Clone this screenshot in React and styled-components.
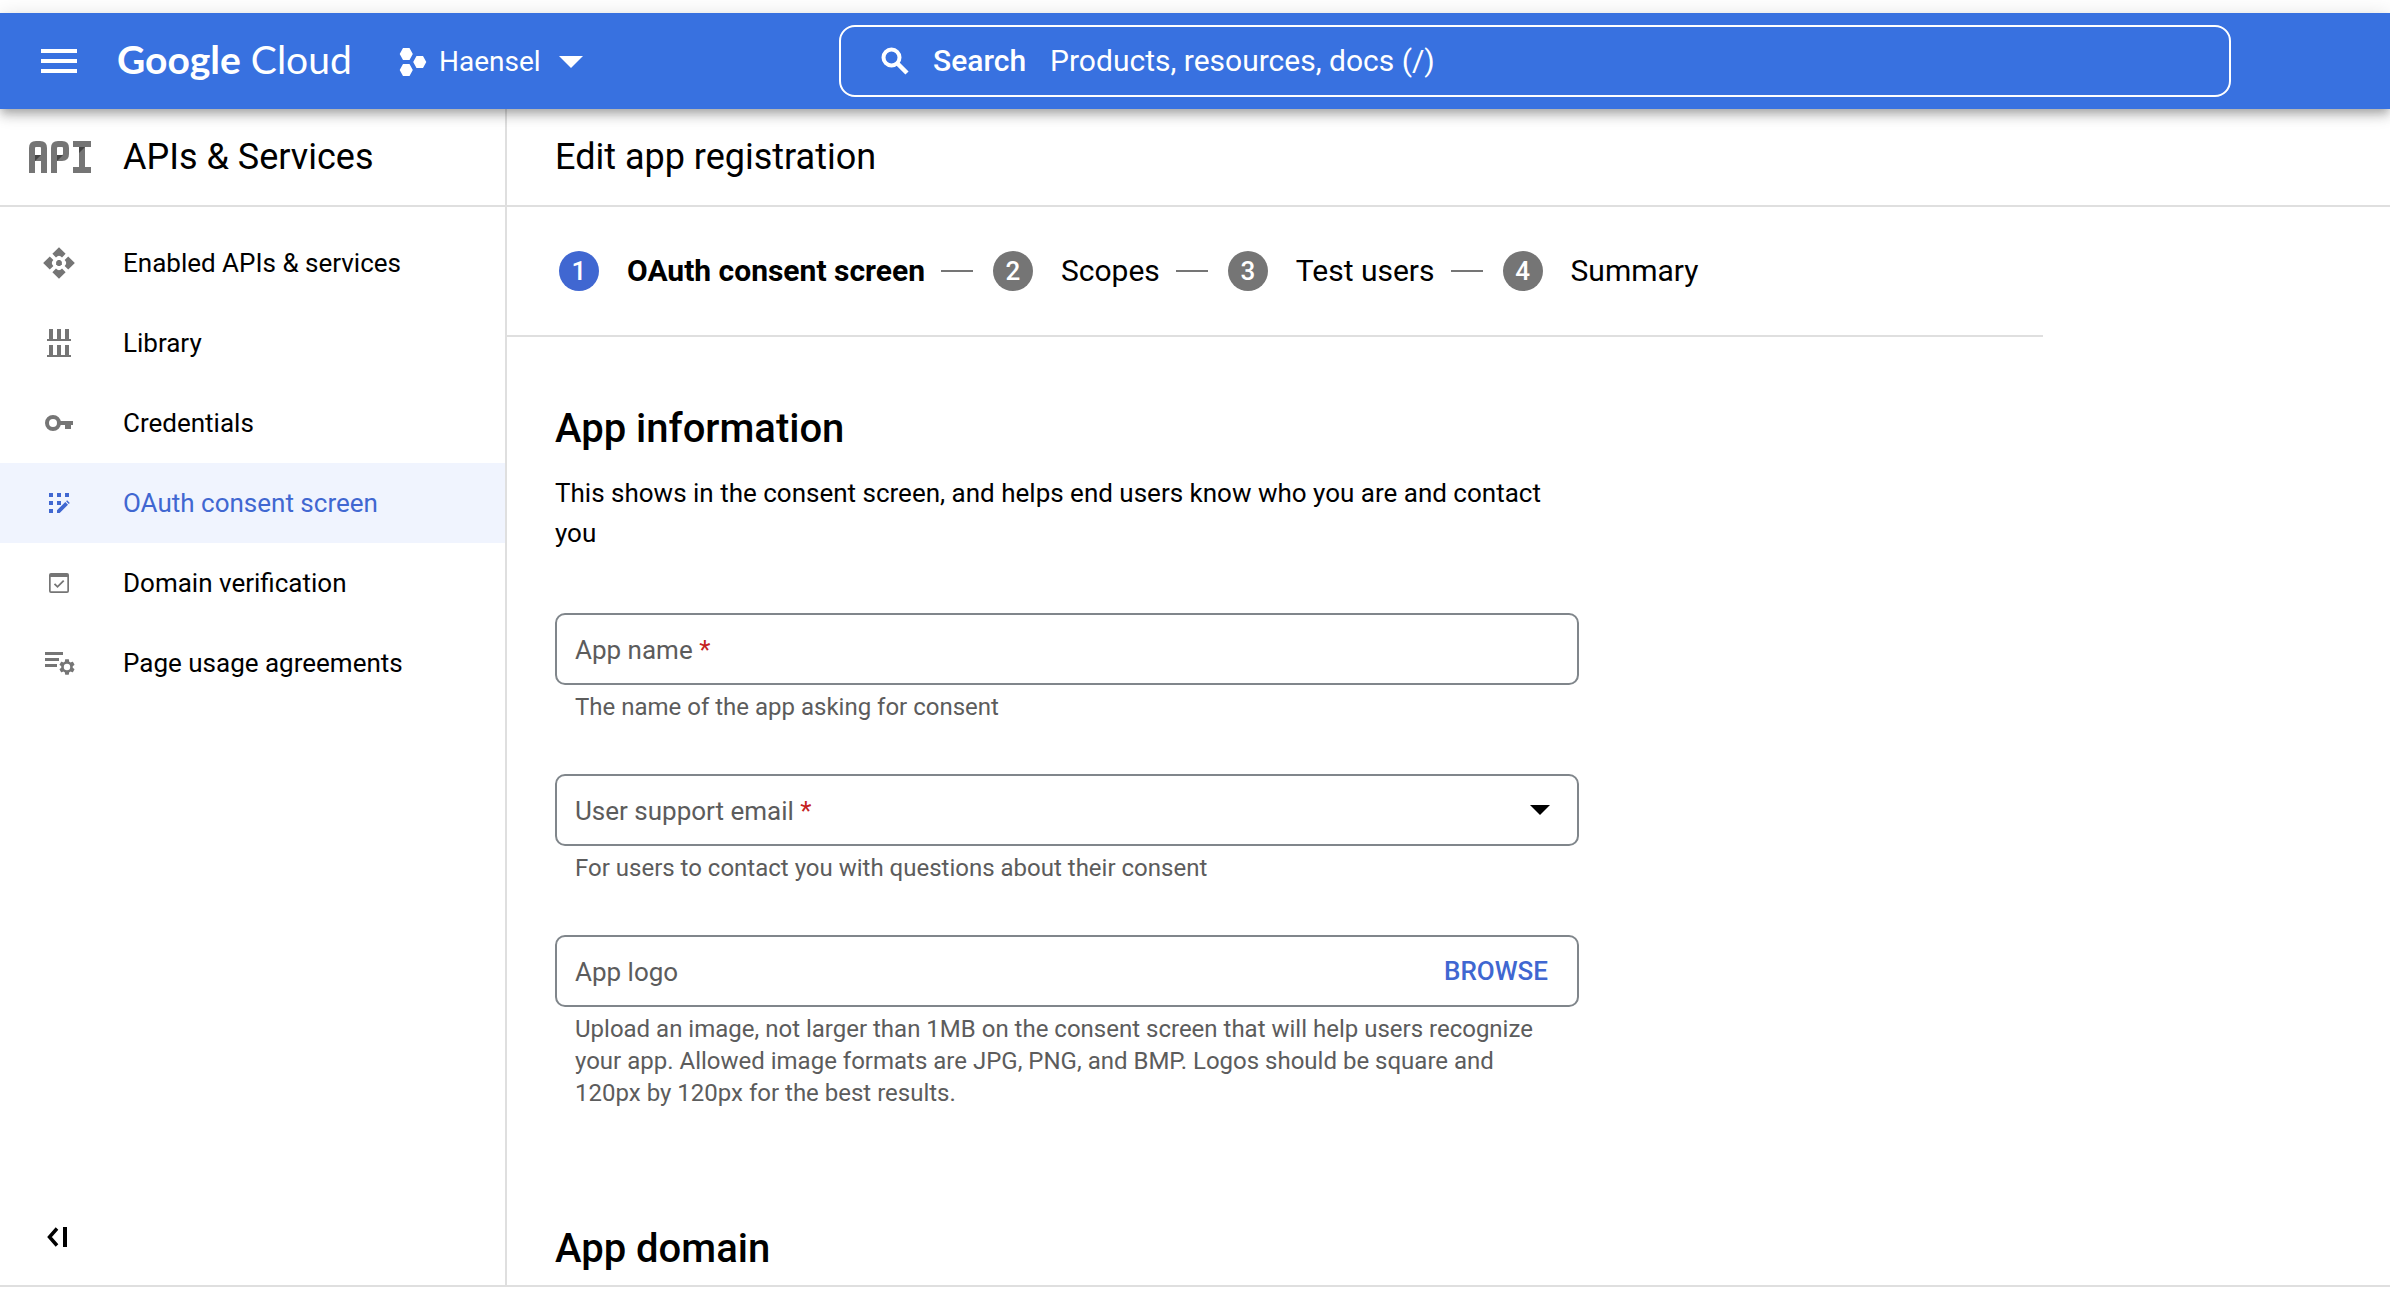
import React from "react";
import styled, { createGlobalStyle } from "styled-components";

const color = {
  header: "#3871e0",
  active: "#4067d1",
  activeBg: "#f0f4fe",
  line: "#dfdfdf",
  icon: "#757575",
  muted: "#5c5c5c",
  outline: "#80868b",
  error: "#c5221f",
};

const GlobalStyle = createGlobalStyle`
  *, *::before, *::after { box-sizing: border-box; }
  body {
    margin: 0;
    background: #fff;
    color: #000;
    font-family: Roboto, "Liberation Sans", sans-serif;
    font-size: 26px;
    line-height: 40px;
  }
  button, input, select { font: inherit; color: inherit; }
  svg { display: block; flex: none; }
`;

const Page = styled.div`
  display: flex;
  flex-direction: column;
  min-height: 100vh;
  padding: 13px 0 8px;
`;

/* ---------- Header ---------- */

const Header = styled.header`
  display: grid;
  grid-template-columns: 839px minmax(0, 1fr) 159px;
  align-items: center;
  height: 96px;
  background: ${color.header};
  color: #fff;
  position: relative;
  z-index: 1;
  box-shadow:
    0 4px 8px -2px rgba(0, 0, 0, 0.2),
    0 8px 10px rgba(0, 0, 0, 0.14),
    0 2px 20px rgba(0, 0, 0, 0.12);
`;

const HeaderStart = styled.div`
  display: flex;
  align-items: center;
  padding-left: 35px;
`;

const PlainButton = styled.button`
  display: flex;
  align-items: center;
  padding: 0;
  border: 0;
  background: none;
  cursor: pointer;
`;

const Wordmark = styled.a`
  margin-left: 34px;
  width: 234px;
  padding-bottom: 4px;
  color: #fff;
  font-family: Lato, sans-serif;
  font-size: 39px;
  line-height: 48px;
  text-decoration: none;
  white-space: nowrap;
  span { font-weight: 700; }
`;

const ProjectButton = styled(PlainButton)`
  margin-left: 48px;
  padding-top: 2px;
  font-size: 28px;
  gap: 12px;
  svg:last-child { margin-left: 6px; }
`;

const SearchBox = styled.div`
  display: flex;
  align-items: center;
  height: 72px;
  padding: 0 40px;
  border: 2px solid #fff;
  border-radius: 16px;
  font-size: 30px;
`;

const SearchLabel = styled.label`
  margin: 0 24px;
  font-weight: 500;
`;

const SearchInput = styled.input`
  flex: 1;
  min-width: 0;
  padding: 0;
  border: 0;
  outline: 0;
  background: none;
  &::placeholder { color: #fff; opacity: 1; }
`;

/* ---------- Body ---------- */

const Body = styled.div`
  display: grid;
  grid-template-columns: 507px minmax(0, 1fr);
  flex: 1;
  border-bottom: 2px solid ${color.line};
`;

const Sidebar = styled.aside`
  display: flex;
  flex-direction: column;
  border-right: 2px solid ${color.line};
`;

const TitleBar = styled.div`
  display: flex;
  align-items: center;
  height: 98px;
  padding-left: ${(p) => p.$inset}px;
  gap: 31px;
  border-bottom: 2px solid ${color.line};
`;

const Title = styled.p`
  margin: 0;
  font-size: 36px;
  font-weight: 400;
  line-height: 48px;
`;

const NavList = styled.ul`
  flex: 1;
  margin: 0;
  padding: 16px 0;
  list-style: none;
`;

const NavLink = styled.a`
  display: flex;
  align-items: center;
  gap: 46px;
  height: 80px;
  padding-left: 41px;
  color: ${(p) => (p.$active ? color.active : "#000")};
  background: ${(p) => (p.$active ? color.activeBg : "transparent")};
  text-decoration: none;
  svg { color: ${(p) => (p.$active ? color.active : color.icon)}; }
`;

const CollapseButton = styled(PlainButton)`
  align-self: flex-start;
  margin: 0 0 30px 39px;
`;

const Main = styled.main`
  display: flex;
  flex-direction: column;
`;

const Stepper = styled.ol`
  display: flex;
  align-items: center;
  width: 100%;
  max-width: 1536px;
  height: 130px;
  margin: 0;
  padding: 0 0 0 52px;
  border-bottom: 2px solid ${color.line};
  list-style: none;
  font-size: 30px;
`;

const Step = styled.li`
  display: flex;
  align-items: center;
  font-weight: ${(p) => (p.$active ? 700 : 400)};
  &:not(:first-child)::before {
    content: "";
    width: 32px;
    height: 2px;
    margin: 0 20px 0 16px;
    background: ${color.icon};
  }
`;

const StepNumber = styled.span`
  display: flex;
  align-items: center;
  justify-content: center;
  width: 40px;
  height: 40px;
  margin-right: 28px;
  border-radius: 50%;
  background: ${(p) => (p.$active ? color.active : color.icon)};
  color: #fff;
  font-size: 26px;
  font-weight: 500;
`;

const Form = styled.form`
  display: flex;
  flex-direction: column;
  max-width: 1072px;
  padding: 68px 0 0 48px;
`;

const Section = styled.section`
  & + & { padding-top: 65px; }
`;

const SectionTitle = styled.h2`
  margin: 0;
  font-size: 40px;
  font-weight: 500;
  line-height: 48px;
`;

const Intro = styled.p`
  margin: 20px 0 60px;
`;

const Field = styled.div`
  margin-bottom: 51px;
`;

const FieldBox = styled.div`
  position: relative;
  display: flex;
  align-items: center;
  height: 72px;
  border: 2px solid ${color.outline};
  border-radius: 10px;
`;

const FieldLabel = styled.label`
  position: absolute;
  left: 18px;
  top: 15px;
  color: ${color.muted};
  pointer-events: none;
`;

const Required = styled.span`
  color: ${color.error};
`;

const TextInput = styled.input`
  flex: 1;
  min-width: 0;
  height: 100%;
  padding: 0 18px;
  border: 0;
  outline: 0;
  border-radius: 8px;
  background: none;
`;

const Select = styled.select`
  flex: 1;
  height: 100%;
  padding: 0 18px;
  border: 0;
  outline: 0;
  appearance: none;
  background: none;
`;

const SelectArrow = styled.svg`
  position: absolute;
  right: 27px;
  top: 29px;
  pointer-events: none;
`;

const BrowseButton = styled(PlainButton)`
  margin-right: 29px;
  color: ${color.active};
  font-weight: 500;
`;

const Help = styled.p`
  margin: 6px 18px 0 20px;
  color: ${color.muted};
  font-size: 24px;
  line-height: 32px;
`;

/* ---------- Icons ---------- */

const Icon = ({ children, viewBox = "0 0 36 36" }) => (
  <svg width="36" height="36" viewBox={viewBox} fill="currentColor" aria-hidden="true">
    {children}
  </svg>
);

const EnabledIcon = () => (
  <Icon viewBox="-0.5 -0.5 25 25">
    <path d="M12 1 7.4 5.6l2.5 2.5Q12 5.9 14.1 8.1l2.5-2.5zM1 12l4.6 4.6 2.5-2.5Q5.9 12 8.1 9.9L5.6 7.4zM23 12l-4.6 4.6-2.5-2.5Q18.1 12 15.9 9.9l2.5-2.5zM12 23l4.6-4.6-2.5-2.5Q12 18.1 9.9 15.9l-2.5 2.5z" />
    <path d="M11.2 10h1.6L14 11.2v1.6L12.8 14h-1.6L10 12.8v-1.6z" />
  </Icon>
);

const LibraryIcon = () => (
  <Icon>
    <path d="M8 4h4v10H8zM16 4h4v10h-4zM24 4h4v10h-4zM6 14h24v2H6zM8 20h4v10H8zM16 20h4v10h-4zM24 20h4v10h-4zM6 30h24v2H6z" />
  </Icon>
);

const KeyIcon = () => (
  <Icon>
    <circle cx="12" cy="18" r="6" fill="none" stroke="currentColor" strokeWidth="4" />
    <path d="M18 16h14v4h-2v4h-6v-4h-6z" />
  </Icon>
);

const ConsentIcon = () => (
  <Icon>
    <path d="M8 8h4v4H8zM16 8h4v4h-4zM24 8h4v4h-4zM8 16h4v4H8zM16 16h4v4h-4zM8 24h4v4H8z" />
    <path d="M16 28v-2.800l8.300-8.200 2.700 2.700-8.300 8.300zM25.100 16.300l1-1 2.700 2.700-1 1z" />
  </Icon>
);

const DomainIcon = () => (
  <Icon>
    <path
      fillRule="evenodd"
      d="M10 8h16a2 2 0 0 1 2 2v16a2 2 0 0 1-2 2H10a2 2 0 0 1-2-2V10a2 2 0 0 1 2-2zM9.700 12v14.300h16.600V12z"
    />
    <path d="M13.500 18.800l3 3 6.200-6.200" fill="none" stroke="currentColor" strokeWidth="1.800" />
  </Icon>
);

const AgreementsIcon = () => (
  <Icon>
    <path d="M4 7h18v3H4zM4 13h14v3H4zM4 19h12v3H4z" />
    <path
      transform="translate(16.400 12.400) scale(.8)"
      d="M19.140 12.940c.04-.3.06-.61.06-.94 0-.32-.02-.64-.07-.94l2.030-1.580c.18-.14.23-.41.12-.61l-1.920-3.320c-.12-.22-.37-.29-.59-.22l-2.390.96c-.5-.38-1.030-.7-1.620-.94L14.400 2.810c-.04-.24-.24-.41-.48-.41h-3.840c-.24 0-.43.17-.47.41l-.36 2.540c-.59.24-1.130.57-1.620.94l-2.390-.96c-.22-.08-.47 0-.59.22L2.740 8.870c-.12.21-.08.47.12.61l2.030 1.580c-.05.3-.09.63-.09.94s.02.64.07.94l-2.030 1.580c-.18.14-.23.41-.12.61l1.920 3.320c.12.22.37.29.59.22l2.390-.96c.5.38 1.030.7 1.620.94l.36 2.540c.05.24.24.41.48.41h3.840c.24 0 .44-.17.47-.41l.36-2.540c.59-.24 1.130-.56 1.620-.94l2.390.96c.22.08.47 0 .59-.22l1.920-3.320c.12-.22.07-.47-.12-.61l-2.010-1.580zM12 16a4 4 0 1 1 0-8 4 4 0 0 1 0 8z"
    />
  </Icon>
);

const MenuIcon = () => (
  <svg width="48" height="48" viewBox="0 0 24 24" fill="#fff" aria-hidden="true">
    <path d="M3 18h18v-2H3zM3 13h18v-2H3zM3 6v2h18V6z" />
  </svg>
);

const ProjectIcon = () => (
  <svg width="28" height="28" viewBox="0 0 28 28" fill="#fff" aria-hidden="true">
    <path d="M4 0h6.500l3.300 6-3.300 6H4L.7 6zM4 16h6.500l3.300 6-3.300 6H4L.7 22zM17.500 8H24l3.300 6-3.300 6h-6.500l-3.300-6z" />
  </svg>
);

const SearchIcon = () => (
  <svg width="28" height="28" viewBox="0 0 28 28" fill="none" stroke="#fff" aria-hidden="true">
    <circle cx="10.500" cy="10.500" r="8" strokeWidth="4" />
    <path d="M16 16l10 10" strokeWidth="4.500" />
  </svg>
);

const ProductIcon = () => (
  <svg width="64" height="32" viewBox="0 0 64 32" fill="none" aria-hidden="true">
    <g stroke={color.icon} strokeWidth="6">
      <path d="M4 32V7q0-4 4-4h4q4 0 4 4v25M4 17h12" />
      <path d="M26 32V7q0-4 4-4h4q4 0 4 4v6q0 4-4 4h-8" />
      <path d="M45 3h18M45 29h18M54 3v26" />
    </g>
    <path fill="#444" d="M7 14h6l-6 6zM29 14h6l-6 6zM51 6h6l-6 6z" />
  </svg>
);

const navItems = [
  { label: "Enabled APIs & services", icon: EnabledIcon },
  { label: "Library", icon: LibraryIcon },
  { label: "Credentials", icon: KeyIcon },
  { label: "OAuth consent screen", icon: ConsentIcon, active: true },
  { label: "Domain verification", icon: DomainIcon },
  { label: "Page usage agreements", icon: AgreementsIcon },
];

const steps = ["OAuth consent screen", "Scopes", "Test users", "Summary"];

export default function App() {
  return (
    <>
      <GlobalStyle />
      <Page>
        <Header>
          <HeaderStart>
            <PlainButton type="button" aria-label="Navigation menu">
              <MenuIcon />
            </PlainButton>
            <Wordmark href="#home">
              <span>Google</span> Cloud
            </Wordmark>
            <ProjectButton type="button">
              <ProjectIcon />
              Haensel
              <svg width="24" height="12" viewBox="0 0 24 12" fill="#fff" aria-hidden="true">
                <path d="M0 0h24L12 12z" />
              </svg>
            </ProjectButton>
          </HeaderStart>
          <SearchBox role="search">
            <SearchIcon />
            <SearchLabel htmlFor="search">Search</SearchLabel>
            <SearchInput id="search" type="text" placeholder="Products, resources, docs (/)" />
          </SearchBox>
        </Header>

        <Body>
          <Sidebar>
            <TitleBar $inset={28}>
              <ProductIcon />
              <Title>APIs &amp; Services</Title>
            </TitleBar>
            <NavList>
              {navItems.map(({ label, icon: ItemIcon, active }) => (
                <li key={label}>
                  <NavLink href="#nav" $active={active} aria-current={active ? "page" : undefined}>
                    <ItemIcon />
                    {label}
                  </NavLink>
                </li>
              ))}
            </NavList>
            <CollapseButton type="button" aria-label="Collapse menu">
              <Icon>
                <path d="M18 9.500L10.500 18l7.500 8.500" fill="none" stroke="currentColor" strokeWidth="3.500" />
                <path d="M24 8h4v20h-4z" />
              </Icon>
            </CollapseButton>
          </Sidebar>

          <Main>
            <TitleBar $inset={48}>
              <Title as="h1">Edit app registration</Title>
            </TitleBar>
            <Stepper>
              {steps.map((label, i) => (
                <Step key={label} $active={i === 0}>
                  <StepNumber $active={i === 0}>{i + 1}</StepNumber>
                  {label}
                </Step>
              ))}
            </Stepper>
            <Form>
              <Section>
                <SectionTitle>App information</SectionTitle>
                <Intro>
                  This shows in the consent screen, and helps end users know who you are and contact
                  you
                </Intro>
                <Field>
                  <FieldBox>
                    <FieldLabel htmlFor="app-name">
                      App name <Required>*</Required>
                    </FieldLabel>
                    <TextInput id="app-name" type="text" required />
                  </FieldBox>
                  <Help>The name of the app asking for consent</Help>
                </Field>
                <Field>
                  <FieldBox>
                    <FieldLabel htmlFor="support-email">
                      User support email <Required>*</Required>
                    </FieldLabel>
                    <Select id="support-email" required defaultValue="">
                      <option value="" />
                    </Select>
                    <SelectArrow width="20" height="10" viewBox="0 0 20 10" aria-hidden="true">
                      <path d="M0 0h20L10 10z" />
                    </SelectArrow>
                  </FieldBox>
                  <Help>For users to contact you with questions about their consent</Help>
                </Field>
                <Field>
                  <FieldBox>
                    <FieldLabel htmlFor="app-logo">App logo</FieldLabel>
                    <TextInput id="app-logo" type="text" />
                    <BrowseButton type="button">BROWSE</BrowseButton>
                  </FieldBox>
                  <Help>
                    Upload an image, not larger than 1MB on the consent screen that will help users
                    recognize your app. Allowed image formats are JPG, PNG, and BMP. Logos should be
                    square and 120px by 120px for the best results.
                  </Help>
                </Field>
              </Section>
              <Section>
                <SectionTitle>App domain</SectionTitle>
              </Section>
            </Form>
          </Main>
        </Body>
      </Page>
    </>
  );
}
